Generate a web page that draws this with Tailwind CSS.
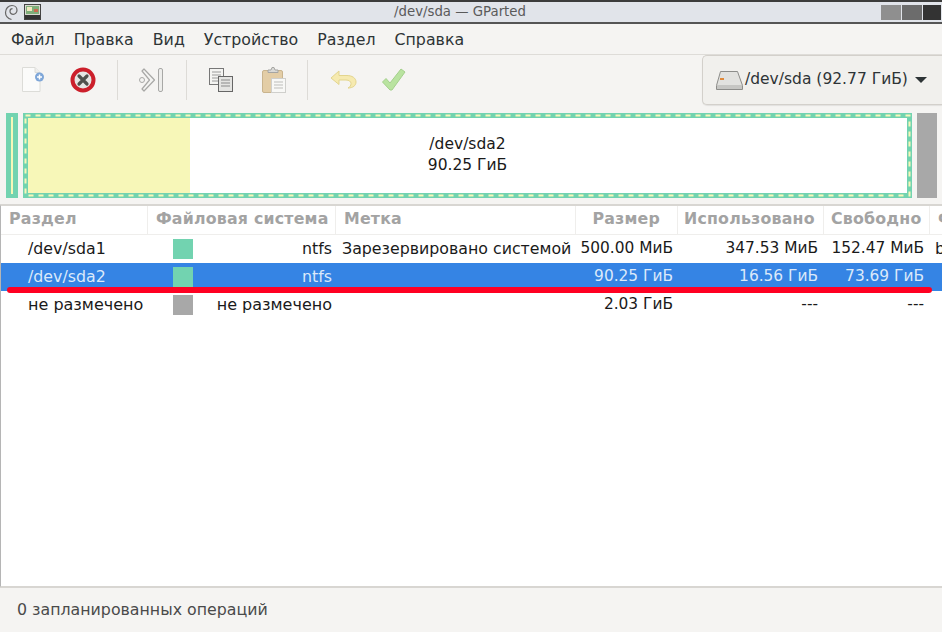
<!DOCTYPE html>
<html lang="ru">
<head>
    <meta charset="UTF-8">
    <title>/dev/sda — GParted</title>
    <script src="https://cdn.jsdelivr.net/npm/@tailwindcss/browser@4"></script>
</head>
<body class="w-[942px] h-[632px] overflow-hidden bg-[#f5f4f2] text-[15.8px] text-[#2e3436] font-['DejaVu_Sans',sans-serif]">
<div class="relative flex flex-col h-[632px]">

    <!-- Title bar -->
    <div class="h-[24px] flex items-center bg-[#e1e4ea] border-t-2 border-b-2 border-t-[#3c3c3c] border-b-[#555555] relative shrink-0">
        <svg class="ml-[4px]" width="14" height="17" viewBox="0 0 14 17"><path d="M7.500 15.500C4 14.500 1.500 12 1.500 8.500 1.500 4.500 4.500 1.500 8 1.500c3 0 5 2.200 5 4.800 0 2.400-1.800 4-3.800 4-1.800 0-3.200-1.300-3.200-3 0-1.500 1-2.600 2.500-2.600" fill="none" stroke="#666" stroke-width="1.200"/></svg>
        <svg class="ml-[6px]" width="18" height="17" viewBox="0 0 18 17">
            <rect x="0.500" y="0.500" width="16" height="15" fill="#d8d8d0" stroke="#444"/>
            <rect x="2" y="2" width="13" height="8" fill="#7fae7a"/>
            <rect x="3" y="3" width="5" height="4" fill="#f0e8c0"/>
            <rect x="10" y="5" width="4" height="3" fill="#c96a50"/>
            <rect x="1" y="11" width="15" height="4" fill="#333"/>
        </svg>
        <span class="absolute left-0 right-0 pr-[22px] text-center text-[13.3px] text-[#5a5a5a]">/dev/sda — GParted</span>
        <div class="ml-auto mr-[1px] flex gap-[1px]">
            <div class="w-[20px] h-[15px] bg-[#8f8f8f]"></div>
            <div class="w-[20px] h-[15px] bg-[#6c6c6c]"></div>
            <div class="w-[18px] h-[15px] bg-[#333333]"></div>
        </div>
    </div>

    <!-- Menu bar -->
    <div class="h-[31px] flex items-center gap-[19px] pl-[11px] pt-[1px] border-b border-[#dedcd8] shrink-0">
        <span>Файл</span><span>Правка</span><span>Вид</span><span>Устройство</span><span>Раздел</span><span>Справка</span>
    </div>

    <!-- Toolbar -->
    <div class="h-[51px] flex items-center pl-[8px] pb-[2px] shrink-0 relative">
        <button class="w-[50px] flex justify-center">
            <svg width="26" height="27" viewBox="0 0 26 27">
                <path d="M2.500 1.500H15l5 5V25.500H2.500Z" fill="#fbfbfa" stroke="#dcdcd8"/>
                <path d="M15 1.500V6.500H20" fill="#eeeeec" stroke="#dcdcd8"/>
                <circle cx="19.500" cy="11" r="4.500" fill="#7ea6d8"/>
                <path d="M19.500 8.500v5M17 11h5" stroke="#fff" stroke-width="1.500"/>
            </svg>
        </button>
        <button class="w-[50px] flex justify-center">
            <svg width="26" height="26" viewBox="0 0 26 26">
                <circle cx="13" cy="13" r="10.500" fill="#e6e6e4" stroke="#cc1f2b" stroke-width="4"/>
                <path d="M9 9l8 8M17 9l-8 8" stroke="#4f514d" stroke-width="3.200" stroke-linecap="round"/>
            </svg>
        </button>
        <div class="w-px h-[40px] bg-[#dddbd7] ml-[9px] mr-[9px]"></div>
        <button class="w-[50px] flex justify-center">
            <svg width="28" height="26" viewBox="0 0 28 26">
                <path d="M6 2l10.500 11L6 24l-2-2 7.500-9L4 4Z" fill="#f4f4f2" stroke="#a8a8a6" stroke-width="1.200" stroke-linejoin="round"/>
                <circle cx="4" cy="13" r="2.500" fill="#f4f4f2" stroke="#a8a8a6"/>
                <rect x="20.500" y="1.500" width="4" height="23" rx="1.500" fill="#ededeb" stroke="#a8a8a6"/>
            </svg>
        </button>
        <div class="w-px h-[40px] bg-[#dddbd7] ml-[9px] mr-[9px]"></div>
        <button class="w-[50px] flex justify-center">
            <svg width="26" height="26" viewBox="0 0 26 26">
                <rect x="1.500" y="1.500" width="14" height="16" fill="#f4f4f2" stroke="#777"/>
                <path d="M4 5h9M4 8h9M4 11h9M4 14h6" stroke="#9a9a9a"/>
                <rect x="10.500" y="9.500" width="14" height="15" fill="#e4e4e2" stroke="#666"/>
                <path d="M13 13h9M13 16h9M13 19h9" stroke="#8a8a8a"/>
            </svg>
        </button>
        <button class="w-[50px] ml-[3px] flex justify-center">
            <svg width="26" height="28" viewBox="0 0 26 28">
                <rect x="1.500" y="4.500" width="20" height="22" rx="1.500" fill="#e3cda6" stroke="#c9b48e"/>
                <path d="M7 6V4h3l1-2.500h2L14 4h3v2.500H7Z" fill="#d9d9d6" stroke="#a5a5a2"/>
                <rect x="10.500" y="12.500" width="14" height="14" fill="#f8f8f6" stroke="#cfcfcc"/>
                <path d="M13 16h9M13 19h9M13 22h9" stroke="#bdbdba"/>
            </svg>
        </button>
        <div class="w-px h-[40px] bg-[#dddbd7] ml-[8px] mr-[10px]"></div>
        <button class="w-[50px] flex justify-center">
            <svg width="28" height="24" viewBox="0 0 28 24">
                <path d="M10 3 2 10l8 6.500V12h7c3 0 5 1.500 5 3.500 0 2-1 3.500-3 4.500 5 0 8-2.500 8-6 0-4-4-6.500-9-6.500h-8Z" fill="#f6eab0" stroke="#e3d58e" stroke-linejoin="round"/>
            </svg>
        </button>
        <button class="w-[50px] ml-[1px] flex justify-center">
            <svg width="26" height="26" viewBox="0 0 26 26">
                <path d="M1.500 15 5 11.500l4 4.500L20 2l4 3-13 18h-2Z" fill="#b9e3a0" stroke="#a4d08c" stroke-linejoin="round"/>
            </svg>
        </button>
        <button class="absolute left-[702px] top-0 w-[240px] h-[50px] flex items-center pl-[12px] text-[15.5px] rounded-l-[5px] border border-r-0 border-[#d3d0cb] bg-[#f1f0ed] shadow-[0_1px_1px_rgba(0,0,0,0.08)]">
            <svg class="shrink-0" width="29" height="21" viewBox="0 0 29 21">
                <path d="M5.500 1.500h17l5 14v4H1.500v-4Z" fill="#e2e2df" stroke="#8d8d8a"/>
                <rect x="2" y="15" width="25" height="4" fill="#c6c6c3"/>
                <rect x="5" y="8" width="4" height="2" fill="#e08a3c"/>
            </svg>
            <span class="ml-[1px]">/dev/sda (92.77 ГиБ)</span>
            <svg class="ml-[7px]" width="12" height="6" viewBox="0 0 12 6"><path d="M0 0h12L6 6Z" fill="#2e3436"/></svg>
        </button>
    </div>

    <!-- Partition map -->
    <div class="h-[98px] pt-[7px] shrink-0 flex pl-[6px] pr-[5px] gap-[5px]">
        <div class="relative w-[12px] h-[85px] bg-[#72d3b0]">
            <div class="absolute left-[5px] top-[4px] bottom-[4px] w-[2px] bg-[#f7f7b8]"></div>
        </div>
        <div class="relative w-[889px] h-[85px] bg-[#72d3b0] p-[5px]">
            <div class="flex h-full bg-white">
                <div class="w-[162px] bg-[#f7f7b8]"></div>
            </div>
            <svg class="absolute inset-0" width="889" height="85" viewBox="0 0 889 85"><rect x="2.500" y="2.500" width="884" height="80" fill="none" stroke="#f7f7b8" stroke-width="2" stroke-dasharray="5 5"/></svg>
            <div class="absolute inset-0 flex flex-col items-center justify-center text-[15.5px] text-[#1a1a1a] leading-[21px] pb-[1px]">
                <span>/dev/sda2</span>
                <span>90.25 ГиБ</span>
            </div>
        </div>
        <div class="w-[20px] h-[85px] bg-[#a8a8a8]"></div>
    </div>

    <!-- Partition table -->
    <div class="flex-1 flex flex-col bg-white border-t-2 border-b-2 border-l-2 border-t-[#d8d6d2] border-b-[#d8d6d2] border-l-[#b5b5b5] -ml-px text-[#1a1a1a] overflow-hidden">
        <div class="h-[29px] grid grid-cols-[147px_188px_240px_102px_146px_106px_13px] items-stretch border-b border-[#efeeec] font-bold text-[#a3a3a3] whitespace-nowrap shrink-0 tracking-[0.2px]">
            <div class="pl-[8px] leading-[25px] border-r border-[#efeeec]">Раздел</div>
            <div class="pl-[8px] leading-[25px] border-r border-[#efeeec]">Файловая система</div>
            <div class="pl-[8px] leading-[25px] border-r border-[#efeeec]">Метка</div>
            <div class="pr-[17px] text-right leading-[25px] border-r border-[#efeeec]">Размер</div>
            <div class="pl-[6px] leading-[25px] border-r border-[#efeeec]">Использовано</div>
            <div class="pl-[7px] leading-[25px] border-r border-[#efeeec]">Свободно</div>
            <div class="pl-[8px] leading-[25px] overflow-hidden">Флаги</div>
        </div>

        <div class="h-[28px] grid grid-cols-[147px_188px_240px_102px_146px_106px_13px] items-center whitespace-nowrap shrink-0">
            <div class="pl-[27px]">/dev/sda1</div>
            <div class="flex items-center justify-between pl-[25px] pr-[4px]"><span class="w-[20px] h-[20px] bg-[#72d3b0]"></span><span>ntfs</span></div>
            <div class="pl-[6px]">Зарезервировано системой</div>
            <div class="pr-[5px] text-right text-[15.4px]">500.00 МиБ</div>
            <div class="pr-[6px] text-right text-[15.4px]">347.53 МиБ</div>
            <div class="pr-[6px] text-right text-[15.4px]">152.47 МиБ</div>
            <div class="pl-[5px] overflow-hidden">boot</div>
        </div>
        <div class="h-[28px] grid grid-cols-[147px_188px_240px_102px_146px_106px_13px] items-center whitespace-nowrap shrink-0 bg-[#3584e4] text-[#dbe9fa]">
            <div class="pl-[27px]">/dev/sda2</div>
            <div class="flex items-center justify-between pl-[25px] pr-[4px]"><span class="w-[20px] h-[20px] bg-[#72d3b0]"></span><span>ntfs</span></div>
            <div></div>
            <div class="pr-[5px] text-right text-[15.4px]">90.25 ГиБ</div>
            <div class="pr-[6px] text-right text-[15.4px]">16.56 ГиБ</div>
            <div class="pr-[6px] text-right text-[15.4px]">73.69 ГиБ</div>
            <div></div>
        </div>
        <div class="h-[28px] grid grid-cols-[147px_188px_240px_102px_146px_106px_13px] items-center whitespace-nowrap shrink-0">
            <div class="pl-[27px] text-[16px]">не размечено</div>
            <div class="flex items-center justify-between pl-[25px] pr-[4px]"><span class="w-[20px] h-[20px] bg-[#a8a8a8]"></span><span class="text-[16px]">не размечено</span></div>
            <div></div>
            <div class="pr-[5px] text-right text-[15.4px]">2.03 ГиБ</div>
            <div class="pr-[6px] text-right text-[15.4px]">---</div>
            <div class="pr-[6px] text-right text-[15.4px]">---</div>
            <div></div>
        </div>
    </div>

    <!-- Status bar -->
    <div class="h-[44px] flex items-center pl-[17px] text-[#4a4a4a] shrink-0">0 запланированных операций</div>

    <!-- Red underline drawn over the screenshot -->
    <div class="absolute left-[7px] top-[287px] w-[925px] h-[6px] rounded-full bg-[#ff0022]"></div>
</div>
</body>
</html>
